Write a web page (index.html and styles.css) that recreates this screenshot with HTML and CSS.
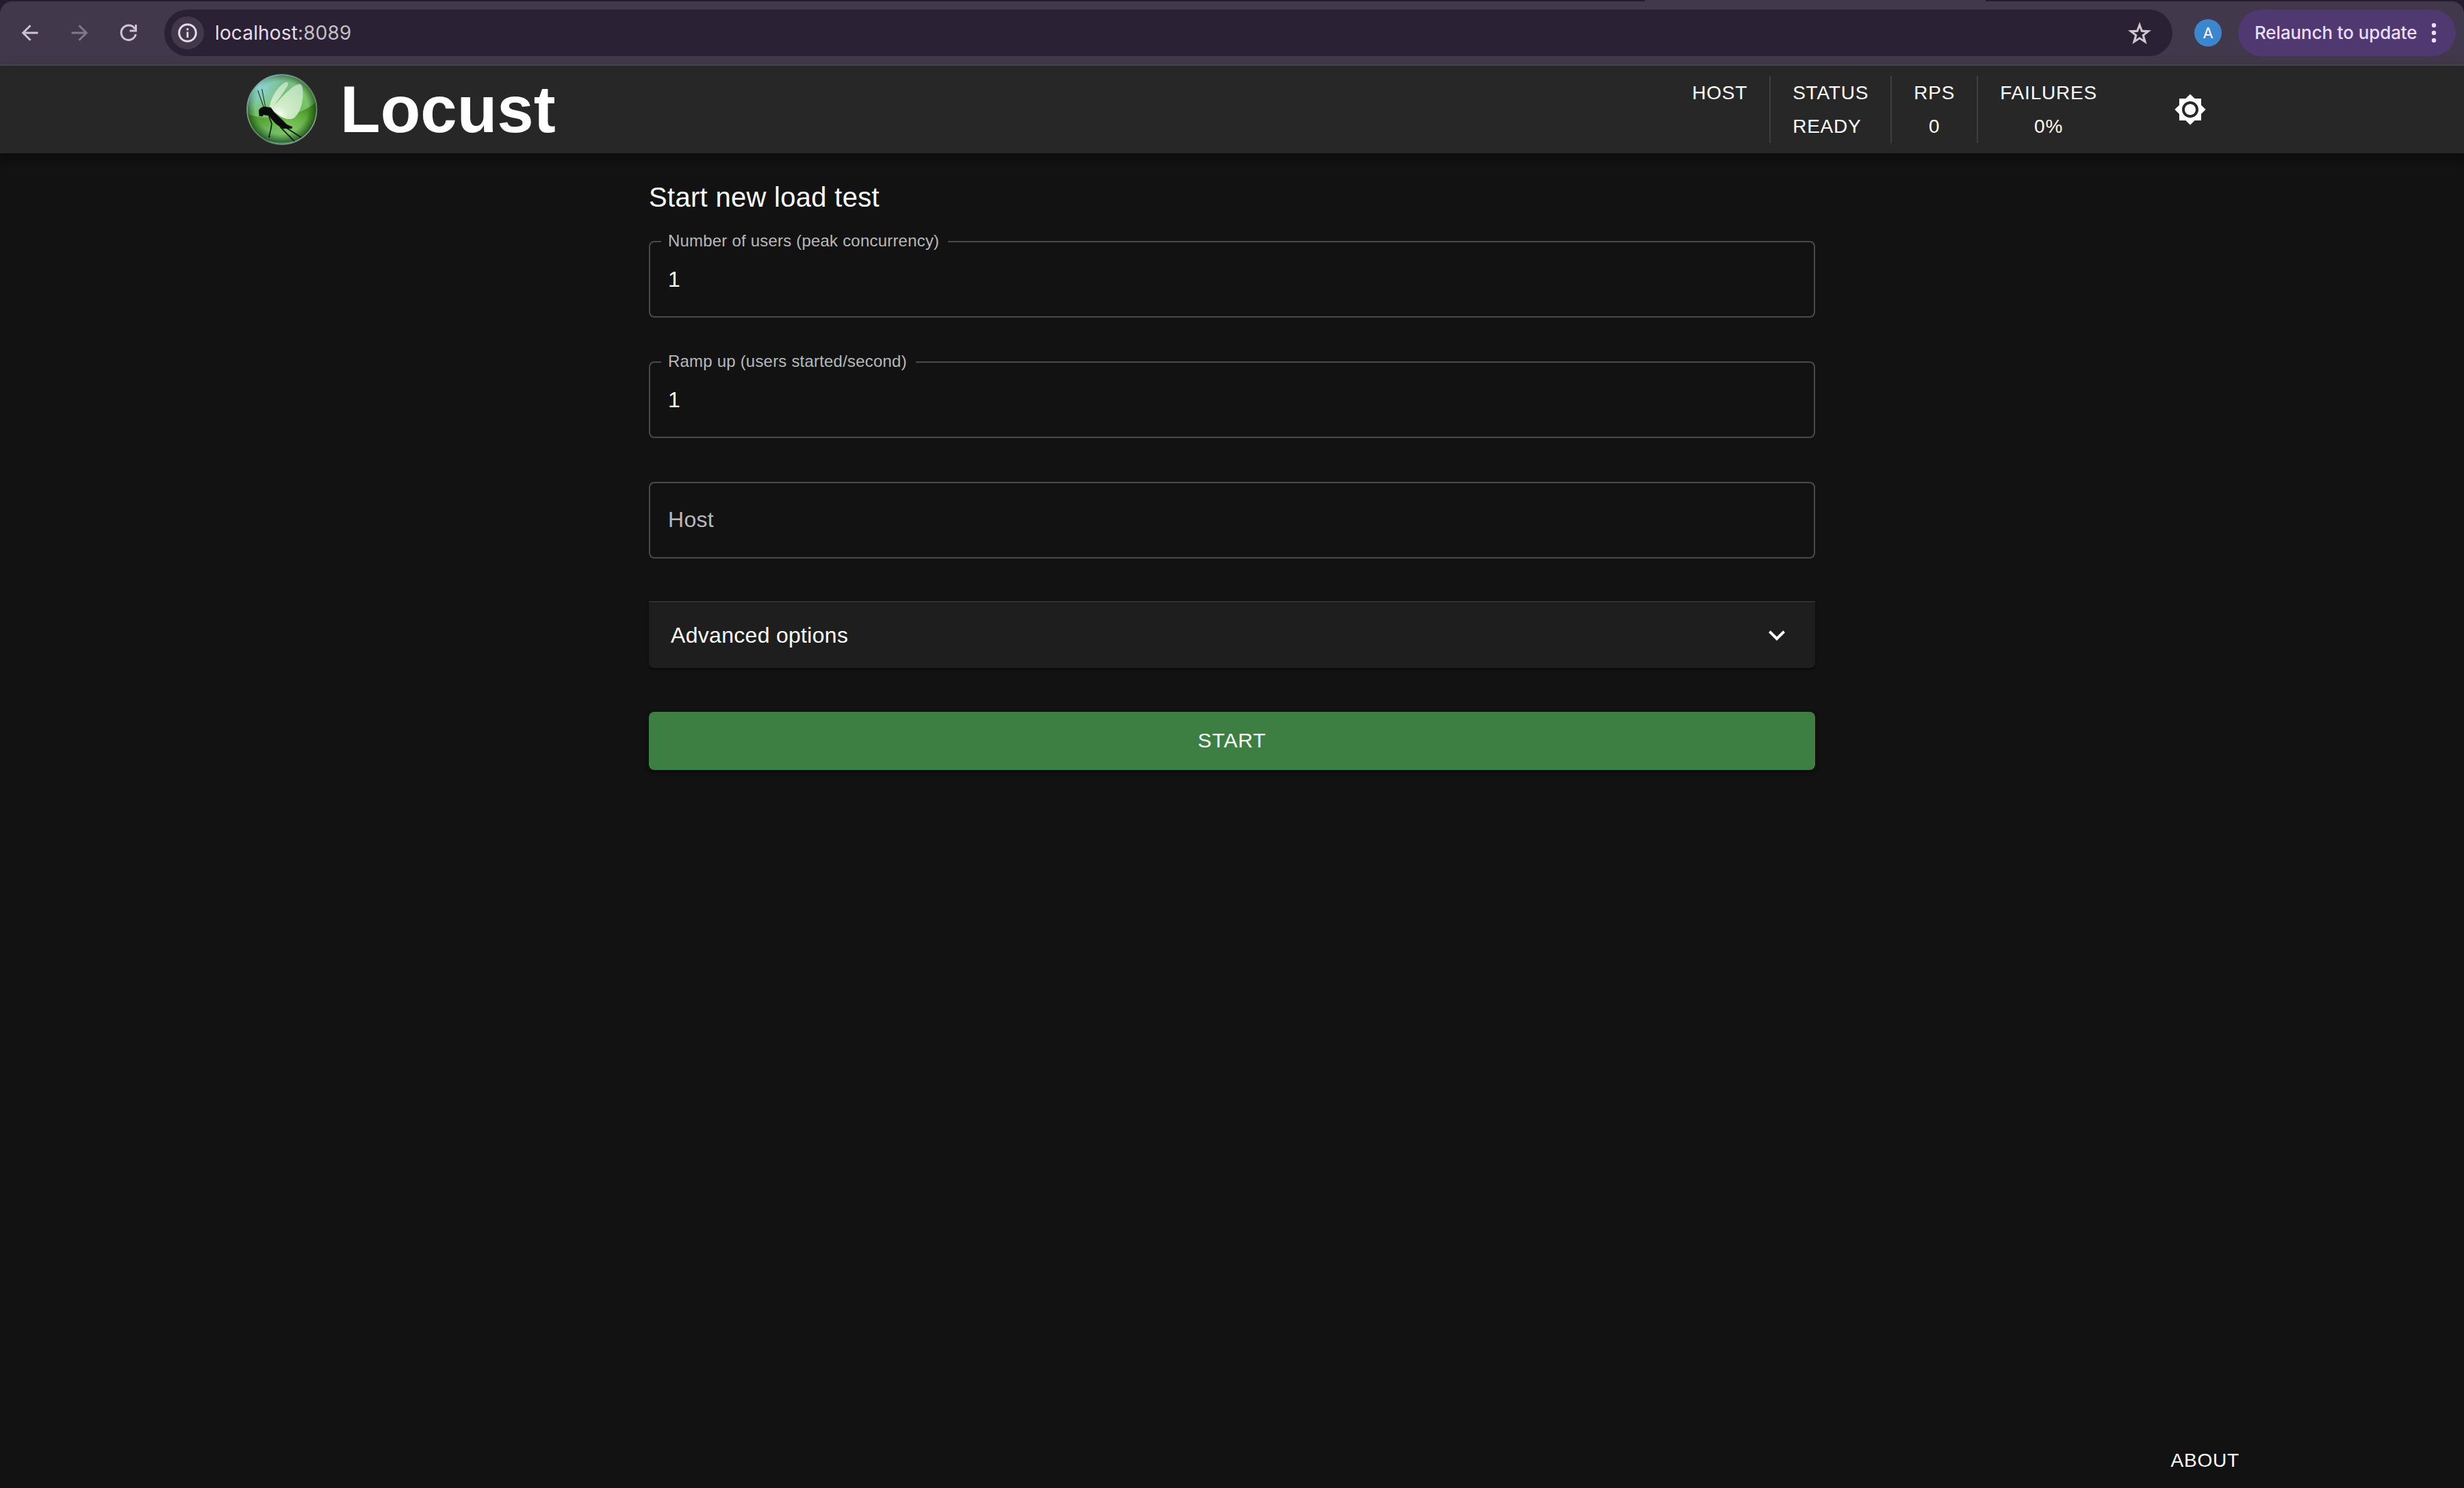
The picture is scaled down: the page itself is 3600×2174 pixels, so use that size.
FILE: index.html
```html
<!DOCTYPE html>
<html lang="en">
<head>
<meta charset="utf-8">
<title>Locust</title>
<link rel="stylesheet" href="styles.css">
</head>
<body>
<div class="tabstrip"><div class="active-tab"></div></div>
<div class="toolbar-wrap">
<div class="toolbar">
  <div class="nav-buttons">
    <svg class="nav-icon" viewBox="0 0 24 24"><path d="M23.500 12H2M12.500 1.200 1.700 12l10.800 10.800" /></svg>
    <svg class="nav-icon disabled" viewBox="0 0 24 24"><path d="M.5 12H22M11.500 1.200 22.300 12 11.500 22.800" /></svg>
    <svg class="nav-icon" viewBox="0 0 24 24"><path d="M22.300 14A10.700 10.700 0 1 1 21 6.200M22.500 0v9H13.500" /></svg>
  </div>
  <div class="omnibox">
    <span class="site-info"><svg width="28" height="28" viewBox="0 0 28 28"><circle cx="14" cy="14" r="12.300" fill="none" stroke="#e8dcea" stroke-width="3"/><path d="M12.600 12.500h2.800v8.500h-2.800zM12.600 7.300h2.800v2.900h-2.800z" fill="#e8dcea"/></svg></span>
    <span class="url">localhost<span class="port">:8089</span></span>
    <svg class="star" width="34" height="33" viewBox="0 0 34 33"><path fill-rule="evenodd" fill="#cfc6d0" d="M17 0l4.300 11.700 12.700.6-10 7.800 3.600 12.400L17 25.600 6.400 32.500 10 20.100 0 12.300l12.700-.6zM17 8.600l-2.200 6.100-6.200.5 4.900 3.900-1.700 6.300L17 21.900l5.200 3.500-1.700-6.300 4.900-3.900-6.200-.5z"/></svg>
  </div>
  <span class="avatar">A</span>
  <div class="relaunch"><span>Relaunch to update</span>
    <svg width="8" height="30" viewBox="0 0 8 30"><g fill="#ecdcf8"><circle cx="4" cy="4" r="3.200"/><circle cx="4" cy="15" r="3.200"/><circle cx="4" cy="26" r="3.200"/></g></svg>
  </div>
</div>
</div>

<header class="appbar">
  <div class="brand">
    <svg class="logo" viewBox="30 24 312 312">
      <defs>
        <linearGradient id="base" x1=".15" y1="0" x2=".6" y2="1"><stop offset="0" stop-color="#8fd6d8"/><stop offset=".22" stop-color="#78bd8c"/><stop offset=".5" stop-color="#7cc46a"/><stop offset="1" stop-color="#67b96c"/></linearGradient>
        <linearGradient id="lower" x1="0" y1="0" x2="0" y2="1"><stop offset="0" stop-color="#3d8420"/><stop offset=".45" stop-color="#58a636"/><stop offset="1" stop-color="#71c6a4"/></linearGradient>
        <radialGradient id="glow" cx="215" cy="270" r="120" gradientUnits="userSpaceOnUse"><stop offset="0" stop-color="#80c65e"/><stop offset="1" stop-color="#80c65e" stop-opacity="0"/></radialGradient>
        <radialGradient id="edge" cx="184" cy="172" r="160" gradientUnits="userSpaceOnUse"><stop offset=".72" stop-color="#123e08" stop-opacity="0"/><stop offset="1" stop-color="#0c3006" stop-opacity=".8"/></radialGradient>
        <radialGradient id="shine" cx="84" cy="84" r="105" gradientUnits="userSpaceOnUse"><stop offset="0" stop-color="#96dce4" stop-opacity=".85"/><stop offset="1" stop-color="#8fd6d8" stop-opacity="0"/></radialGradient>
        <radialGradient id="wing" cx="170" cy="205" r="140" gradientUnits="userSpaceOnUse"><stop offset="0" stop-color="#fff"/><stop offset=".3" stop-color="#e2f4da" stop-opacity=".86"/><stop offset="1" stop-color="#d8f0da" stop-opacity=".68"/></radialGradient>
        <linearGradient id="rim" x1="0" y1="0" x2="1" y2="1"><stop offset="0" stop-color="#8fb8b4"/><stop offset=".35" stop-color="#6d8a84"/><stop offset=".6" stop-color="#5d7060"/><stop offset="1" stop-color="#a3b8b0"/></linearGradient>
        <clipPath id="ball"><circle cx="185.500" cy="180" r="150"/></clipPath>
      </defs>
      <circle cx="185.500" cy="180" r="153" fill="url(#base)" stroke="url(#rim)" stroke-width="4"/>
      <g clip-path="url(#ball)">
        <path d="M30 196C100 232 250 226 345 140V340H30z" fill="url(#lower)"/>
        <path d="M30 196C100 232 250 226 345 140V340H30z" fill="url(#glow)"/>
        <circle cx="185.500" cy="180" r="151" fill="url(#edge)"/>
        <circle cx="185.500" cy="180" r="151" fill="url(#shine)"/>
        <path d="M80 296Q185 355 290 296Q260 345 185 345T80 296z" fill="#74d2c0" opacity=".55"/>
        <path d="M132 164C142 116 178 68 205 60C216 60 214 72 207 82C190 110 164 144 150 164C180 130 232 72 262 68C278 68 278 96 278 122C274 170 252 222 222 222C204 224 182 214 164 198C150 188 138 176 132 164z" fill="url(#wing)"/>
        <path d="M84 184C90 172 102 165 116 168L138 172L152 192L184 222L208 246L232 256L229 264L188 264L158 242L128 208L104 203L102 210L86 209z" fill="#090c0a"/>
        <path d="M105 168L80 96M113 168L98 90" fill="none" stroke="#233b27" stroke-width="3.500"/>
        <path d="M128 208L141 242L138 262L129 300L134 299" fill="none" stroke="#10200d" stroke-width="5"/>
        <path d="M178 256L241 320M205 260L272 304" fill="none" stroke="#101c28" stroke-width="5.500"/>
      </g>
    </svg>
    <h1>Locust</h1>
  </div>
  <div class="stats">
    <div class="stat"><span>HOST</span><span></span></div>
    <div class="stat start"><span>STATUS</span><span>READY</span></div>
    <div class="stat"><span>RPS</span><span>0</span></div>
    <div class="stat"><span>FAILURES</span><span>0%</span></div>
  </div>
  <button class="theme-toggle" aria-label="Toggle theme"><svg width="48" height="48" viewBox="0 0 24 24" fill="#fff"><path d="M20 8.690V4h-4.690L12 .690 8.690 4H4v4.690L.690 12 4 15.310V20h4.690L12 23.310 15.310 20H20v-4.690L23.310 12 20 8.690zM12 18c-3.310 0-6-2.690-6-6s2.690-6 6-6 6 2.690 6 6-2.690 6-6 6zm0-10c-2.210 0-4 1.790-4 4s1.790 4 4 4 4-1.790 4-4-1.790-4-4-4z"/></svg></button>
</header>

<main>
  <h2>Start new load test</h2>
  <form class="form">
    <fieldset class="field"><legend>Number of users (peak concurrency)</legend><input value="1" aria-label="Number of users"></fieldset>
    <fieldset class="field"><legend>Ramp up (users started/second)</legend><input value="1" aria-label="Ramp up"></fieldset>
    <input class="host" placeholder="Host">
    <div class="accordion"><span>Advanced options</span>
      <svg width="48" height="48" viewBox="0 0 24 24" fill="#fff"><path d="M16.590 8.590 12 13.170 7.410 8.590 6 10l6 6 6-6z"/></svg>
    </div>
    <button class="start-button" type="button">START</button>
  </form>
</main>
<footer>ABOUT</footer>
</body>
</html>
```
FILE: styles.css
```css
* { box-sizing: border-box; }
body {
  margin: 0;
  height: 2174px;
  overflow: hidden;
  display: flex;
  flex-direction: column;
  background: #121212;
  color: #fff;
  font-family: "Liberation Sans", Arial, sans-serif;
}
svg { display: block; flex: none; }
button { border: 0; margin: 0; font-family: inherit; color: inherit; }

/* Browser toolbar */
.tabstrip { height: 2px; flex: none; background: #241b2f; }
.active-tab { width: 498px; height: 2px; margin-left: 2403px; background: #42384b; }
.toolbar-wrap { flex: none; background: #241b2f; }
.toolbar {
  height: 94px;
  display: flex;
  align-items: center;
  padding: 0 12px 0 32px;
  background: #42384b;
  border-bottom: 2px solid #4a474d;
  border-radius: 18px 18px 0 0;
}
.nav-buttons { display: flex; gap: 48px; width: 208px; }
.nav-icon { width: 24px; height: 24px; fill: none; stroke: #cfc1dc; stroke-width: 3; overflow: visible; }
.nav-icon.disabled { stroke: #81788a; }
.omnibox {
  width: 2934px;
  height: 68px;
  display: flex;
  align-items: center;
  padding: 0 31px 0 10px;
  border-radius: 34px;
  background: #2b2135;
}
.site-info { width: 48px; height: 48px; border-radius: 50%; background: #42384b; display: flex; align-items: center; justify-content: center; }
.url { margin-left: 16px; font: 28px/40px Inter, sans-serif; letter-spacing: .15px; color: #e8dcea; }
.port { color: #c5bdc6; }
.star { margin-left: auto; }
.avatar {
  width: 40px; height: 40px; margin-left: 32px;
  border-radius: 50%; background: #3b86cc;
  font: 22px/40px Inter, sans-serif; text-align: center;
}
.relaunch {
  width: 318px; height: 68px; margin-left: 24px; padding: 0 28px 0 24px;
  display: flex; align-items: center; justify-content: space-between;
  border-radius: 34px; background: #503871; color: #ecdcf8;
  font: 500 26px/36px Inter, sans-serif; letter-spacing: -.12px; white-space: nowrap;
}

/* App bar */
.appbar {
  flex: none;
  height: 128px;
  display: flex;
  align-items: center;
  padding: 0 360px;
  background: #272727;
  box-shadow: 0 4px 8px -2px rgba(0,0,0,.2), 0 8px 10px rgba(0,0,0,.14), 0 2px 20px rgba(0,0,0,.12);
}
.brand { display: flex; align-items: center; gap: 33px; }
.logo { width: 104px; height: 104px; }
h1 { margin: 0; font-size: 96px; line-height: 112px; font-weight: 700; }
.stats { display: flex; margin: 0 64px 0 auto; font-size: 28px; line-height: 49px; letter-spacing: .8px; }
.stat { height: 98px; padding: 0 32px; display: flex; flex-direction: column; align-items: center; }
.stat.start { align-items: flex-start; }
.stat + .stat { border-left: 2px solid #3e3e3e; }
.theme-toggle { padding: 16px; background: none; }

/* Form */
main { width: 1704px; margin: 32px auto 0; }
h2 { margin: 0 0 32px; font-size: 40px; line-height: 64px; font-weight: 400; letter-spacing: .3px; }
.form { display: flex; flex-direction: column; gap: 64px; }
.field {
  height: 123px;
  margin: -11px 0 0;
  padding: 0 16px;
  border: 2px solid #4a4a4a;
  border-radius: 8px;
}
.field legend { height: 24px; padding: 0 13px 0 10px; font-size: 24px; line-height: 22px; letter-spacing: .2px; color: #b8b8b8; }
input { display: block; width: 100%; font: 32px/46px "Liberation Sans", Arial, sans-serif; letter-spacing: .3px; color: #fff; background: none; border: 0; outline: 0; }
.field input { height: 46px; margin-top: 20px; padding: 0 10px; }
.host { height: 112px; padding: 0 26px 2px; border: 2px solid #4a4a4a; border-radius: 8px; }
.host::placeholder { color: #b8b8b8; opacity: 1; }
.accordion {
  height: 98px;
  margin-top: -2px;
  padding: 0 32px;
  display: flex;
  align-items: center;
  justify-content: space-between;
  border-top: 2px solid #303030;
  border-radius: 0 0 8px 8px;
  background: #1e1e1e;
  font-size: 32px;
  line-height: 48px;
  letter-spacing: .3px;
  box-shadow: 0 4px 2px -2px rgba(0,0,0,.2), 0 2px 2px rgba(0,0,0,.14), 0 2px 6px rgba(0,0,0,.12);
}
.start-button {
  height: 85px;
  padding: 0 0 2px;
  border-radius: 8px;
  background: #3d7f43;
  font-size: 30px;
  line-height: 52px;
  letter-spacing: .86px;
  box-shadow: 0 6px 2px -4px rgba(0,0,0,.2), 0 4px 4px rgba(0,0,0,.14), 0 2px 10px rgba(0,0,0,.12);
}
footer { margin: auto 328px 16px auto; font-size: 28px; line-height: 49px; letter-spacing: .8px; }
```
